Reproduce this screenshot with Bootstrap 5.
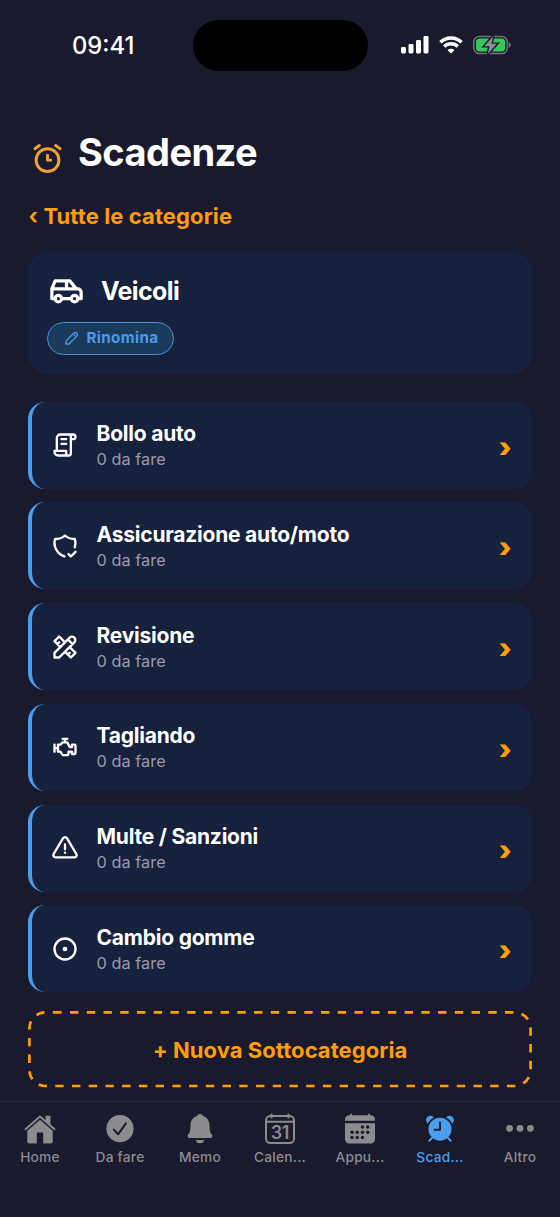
<!DOCTYPE html>
<html lang="it">
<head>
<meta charset="utf-8">
<meta name="viewport" content="width=device-width, initial-scale=1">
<title>Scadenze</title>
<link href="https://cdn.jsdelivr.net/npm/bootstrap@5.3.0/dist/css/bootstrap.min.css" rel="stylesheet">
<script src="https://cdn.jsdelivr.net/npm/bootstrap@5.3.0/dist/js/bootstrap.bundle.min.js" defer></script>
<style>
  body { background:#1a1a2e; color:#fff; font-family:Inter,"Liberation Sans",sans-serif; height:1217px; overflow:hidden; line-height:1; }
  svg { display:block; flex:none; }
  .tb { fill:none; stroke:currentColor; stroke-width:2; stroke-linecap:round; stroke-linejoin:round; }
  .status-row { height:90px; padding:0 49px 0 72px; }
  .clock { font-size:23.8px; font-weight:500; width:120.600px; padding-top:2px; }
  .island { width:175px; height:51px; border-radius:26px; background:#000; }
  .page-head { height:44px; margin-top:46px; padding-left:28px; }
  .page-head h1 { font-size:38px; font-weight:700; margin:-13px 0 0 11px; letter-spacing:-.55px; line-height:44px; }
  .amber { color:#ff9d0a; }
  .back-link { font-size:22px; font-weight:700; line-height:28px; margin:22px 0 0 28.500px; letter-spacing:.1px; text-decoration:none; }
  .panel { background:#16213e; border-radius:19.500px; }
  .cat-head { margin:21.500px 28px 0; height:122px; padding:19.500px 19px 0; }
  .cat-head h2 { font-size:25px; font-weight:700; margin:0 0 0 15px; letter-spacing:-.6px; }
  .btn-rename { height:33px; width:127px; border:1.4px solid #4a90d9; border-radius:17px; background:#1a3a5c; color:#4a9aea; font-size:15.2px; font-weight:700; margin-top:11.500px; padding:0 0 0 15px; letter-spacing:.35px; }
  .items { margin:28px 28px 0; gap:13.8px; }
  .item-row { height:87px; border-left:4px solid #4a9eed; border-radius:17px; padding:0 20.500px 0 19px; color:#fff; text-decoration:none; }
  .item-row .label-col { margin:-1px 0 0 17.500px; }
  .item-row .name { font-size:21px; font-weight:700; line-height:26px; letter-spacing:-.22px; margin-top:1px; }
  .item-row .todo { font-size:16.3px; line-height:20px; margin-top:2px; color:#9a9bab; letter-spacing:.05px; }
  .item-row .chev { font-size:27px; font-weight:900; line-height:30px; padding-top:5px; }
  .new-sub { margin:19px 28px 0; height:77px; font-size:22px; font-weight:700; letter-spacing:.06px; background:none; border:0; }
  .tabs { margin-top:12.500px; border-top:1px solid #29293b; height:116px; padding-top:11px; }
  .tabs a { width:80px; color:#8c8c8e; font-size:13.7px; font-weight:500; letter-spacing:.25px; text-decoration:none; }
  .tabs a svg { width:34px; height:32px; }
  .tabs a span { margin-top:3.600px; line-height:16px; }
  .tabs a.active { color:#4a9eed; }
</style>
</head>
<body class="d-flex flex-column">
<header class="status-row d-flex align-items-center flex-shrink-0">
  <span class="clock">09:41</span>
  <div class="island"></div>
  <div class="d-flex align-items-center ms-auto">
    <svg width="28" height="18" viewBox="0 0 28 18" fill="#fff"><rect x="0" y="11" width="5" height="6.5" rx="1.4"/><rect x="7.5" y="8" width="5" height="9.5" rx="1.4"/><rect x="15" y="4" width="5" height="13.5" rx="1.4"/><rect x="22.5" y="0" width="5" height="17.5" rx="1.4"/></svg>
    <svg style="margin-left:10px" width="24" height="18" viewBox="0 0 24 18"><g fill="none" stroke="#fff" stroke-width="3.3"><path d="M1.4 6.3a15.2 15.2 0 0 1 21.2 0"/><path d="M5.2 10.5a9.8 9.8 0 0 1 13.6 0"/></g><path d="M12 17.6l-3.5-3.5a5 5 0 0 1 7 0z" fill="#fff"/></svg>
    <svg style="margin-left:10px" width="38" height="20" viewBox="0 0 38.500 20"><rect x=".8" y="1.3" width="34" height="17.4" rx="5.8" fill="none" stroke="#747381" stroke-width="1.5"/><path d="M36.3 7v6q2-.8 2-3t-2-3z" fill="#747381"/><rect x="3" y="3.5" width="29.6" height="13" rx="3.8" fill="#34c759"/><path d="M20.500.8L11.500 11.200h5.400l-2 8L24.200 8.800h-5.500z" fill="#8f8d97" stroke="#1a1a2e" stroke-width="2.800" paint-order="stroke"/></svg>
  </div>
</header>

<div class="page-head d-flex align-items-center flex-shrink-0">
  <svg class="tb" width="39" height="39" viewBox="0 0 24 24" style="color:#f2a136;stroke-width:1.800"><circle cx="12" cy="13" r="7"/><path d="M12 10v3h2M7 4L4.25 6M17 4l2.75 2"/></svg>
  <h1>Scadenze</h1>
</div>
<a class="back-link amber" href="#">‹ Tutte le categorie</a>

<section class="panel cat-head flex-shrink-0">
  <div class="d-flex align-items-center">
    <svg class="tb" width="39" height="39" viewBox="0 0 24 24"><circle cx="7" cy="17" r="2"/><circle cx="17" cy="17" r="2"/><path d="M5 17H3v-6l2-5h9l4 5h1a2 2 0 0 1 2 2v4h-2m-4 0H9m-6-6h15m-6 0V6"/></svg>
    <h2>Veicoli</h2>
  </div>
  <button class="btn-rename d-flex align-items-center"><svg class="tb me-2" style="stroke-width:1.7" width="18" height="18" viewBox="0 0 24 24"><path d="M4 20h4L18.500 9.500a2.828 2.828 0 1 0-4-4L4 16v4M13.500 6.500l4 4"/></svg><span style="margin-left:-2.500px">Rinomina</span></button>
</section>

<main class="items d-flex flex-column flex-shrink-0">
  <a href="#" class="panel item-row d-flex align-items-center">
    <svg class="tb" width="28" height="28" viewBox="0 0 24 24"><path d="M15 21H6a3 3 0 0 1-3-3v-1h10v2a2 2 0 0 0 4 0V5a2 2 0 1 1 2 2h-2m2-4H8a3 3 0 0 0-3 3v11M9 7h4M9 11h4"/></svg>
    <div class="label-col"><div class="name">Bollo auto</div><div class="todo">0 da fare</div></div><span class="chev amber ms-auto">›</span>
  </a>
  <a href="#" class="panel item-row d-flex align-items-center">
    <svg class="tb" width="28" height="28" viewBox="0 0 24 24"><path d="M11.460 20.846a12 12 0 0 1-7.960-14.846a12 12 0 0 0 8.500-3a12 12 0 0 0 8.500 3a12 12 0 0 1-.09 7.060M15 19l2 2 4-4"/></svg>
    <div class="label-col"><div class="name">Assicurazione auto/moto</div><div class="todo">0 da fare</div></div><span class="chev amber ms-auto">›</span>
  </a>
  <a href="#" class="panel item-row d-flex align-items-center">
    <svg class="tb" width="28" height="28" viewBox="0 0 24 24"><path d="M3 21h4L20 8a1.500 1.500 0 0 0-4-4L3 17v4M14.500 5.500l4 4M12 8L7 3 3 7l5 5M7 8L5.500 9.500M16 12l5 5-4 4-5-5M16 17l-1.500 1.500"/></svg>
    <div class="label-col"><div class="name">Revisione</div><div class="todo">0 da fare</div></div><span class="chev amber ms-auto">›</span>
  </a>
  <a href="#" class="panel item-row d-flex align-items-center">
    <svg class="tb" width="28" height="28" viewBox="0 0 24 24"><path d="M3 10v6M12 5v3M10 5h4M5 13H3M6 10h2l2-2h3.382a1 1 0 0 1 .894.553l1.448 2.894a1 1 0 0 0 .894.553H18v-2h2a1 1 0 0 1 1 1v6a1 1 0 0 1-1 1h-2v-2h-3v2a1 1 0 0 1-1 1h-3.465a1 1 0 0 1-.832-.445L8 16H6v-6"/></svg>
    <div class="label-col"><div class="name">Tagliando</div><div class="todo">0 da fare</div></div><span class="chev amber ms-auto">›</span>
  </a>
  <a href="#" class="panel item-row d-flex align-items-center">
    <svg class="tb" width="28" height="28" viewBox="0 0 24 24"><path d="M12 9v4M12 16h.01M10.363 3.591L2.257 17.125a1.914 1.914 0 0 0 1.636 2.871h16.214a1.914 1.914 0 0 0 1.636-2.870L13.637 3.590a1.914 1.914 0 0 0-3.274 0z"/></svg>
    <div class="label-col"><div class="name">Multe / Sanzioni</div><div class="todo">0 da fare</div></div><span class="chev amber ms-auto">›</span>
  </a>
  <a href="#" class="panel item-row d-flex align-items-center">
    <svg class="tb" width="28" height="28" viewBox="0 0 24 24"><circle cx="12" cy="12" r="9"/><circle cx="12" cy="12" r="1" fill="currentColor"/></svg>
    <div class="label-col"><div class="name">Cambio gomme</div><div class="todo">0 da fare</div></div><span class="chev amber ms-auto">›</span>
  </a>
</main>

<button class="new-sub amber position-relative flex-shrink-0 p-0">
  <svg class="position-absolute top-0 start-0" width="504" height="77" viewBox="0 0 504 77"><path d="M25.300 1.400H486.600a16 16 0 0 1 16 16V59a16 16 0 0 1-16 16H17.400a16 16 0 0 1-16-16V17.400a16 16 0 0 1 16-16h7.900" fill="none" stroke="#ff9d0a" stroke-width="2.7" stroke-dasharray="8.400 8.330"/></svg>
  + Nuova Sottocategoria
</button>

<nav class="tabs d-flex flex-shrink-0">
  <a href="#" class="d-flex flex-column align-items-center"><svg viewBox="0 0 34 32" fill="currentColor"><path d="M2.500 16.200L17 3.500l14.500 12.700" fill="none" stroke="currentColor" stroke-width="2" stroke-linecap="round" stroke-linejoin="round"/><path d="M22.500 2.700h5v10l-5-4.500zM17 6.800l12.700 11v10.700a2 2 0 0 1-2 2h-7.500V20.300a.8.8 0 0 0-.8-.8h-4.800a.8.800 0 0 0-.8.800V30.500H6.300a2 2 0 0 1-2-2V17.800z"/></svg><span>Home</span></a>
  <a href="#" class="d-flex flex-column align-items-center"><svg viewBox="0 0 34 32"><circle cx="17" cy="15.700" r="13.600" fill="currentColor"/><path d="M10.800 16.600l4.300 4.700 7.800-11" fill="none" stroke="#1a1a2e" stroke-width="2" stroke-linecap="round" stroke-linejoin="round"/></svg><span>Da fare</span></a>
  <a href="#" class="d-flex flex-column align-items-center"><svg viewBox="0 0 34 32" fill="currentColor"><path d="M17 .9a3 3 0 0 1 3 2.200c4.300 1.300 6.600 5 6.600 9.800 0 5.300.6 6.500 2.300 8.700 1.200 1.700.4 3.300-1.300 3.300H6.400c-1.700 0-2.500-1.600-1.300-3.300 1.700-2.200 2.300-3.400 2.300-8.700C7.400 8.100 9.700 4.400 14 3.100A3 3 0 0 1 17 .9zM12.700 27h8.600c-.4 2-2.100 3.300-4.300 3.300s-3.900-1.300-4.300-3.300z"/></svg><span>Memo</span></a>
  <a href="#" class="d-flex flex-column align-items-center"><svg viewBox="0 0 34 32"><rect x="3" y="3" width="28" height="27" rx="4.200" fill="none" stroke="currentColor" stroke-width="2"/><path d="M3.200 8.800h27.600M8.500 1.500v3M25.500 1.500v3" fill="none" stroke="currentColor" stroke-width="2" stroke-linecap="round"/><text x="16.800" y="25.800" text-anchor="middle" font-size="18" font-weight="600" letter-spacing="-.5" fill="currentColor">31</text></svg><span>Calen...</span></a>
  <a href="#" class="d-flex flex-column align-items-center"><svg viewBox="0 0 34 32"><path d="M2 7.800V6.500a4.200 4.200 0 0 1 4.200-4.200h21.600A4.200 4.200 0 0 1 32 6.500v1.300zM2 10.200h30v16a4.200 4.200 0 0 1-4.200 4.200H6.200A4.200 4.200 0 0 1 2 26.200z" fill="currentColor"/><path d="M8 1.400v2M26 1.400v2" stroke="currentColor" stroke-width="1.800" stroke-linecap="round"/><g fill="#1a1a2e"><circle cx="19.500" cy="14" r="1.700"/><circle cx="24.700" cy="14" r="1.700"/><circle cx="9" cy="19.300" r="1.700"/><circle cx="14.200" cy="19.300" r="1.700"/><circle cx="19.500" cy="19.300" r="1.700"/><circle cx="24.700" cy="19.300" r="1.700"/><circle cx="9" cy="24.500" r="1.700"/><circle cx="14.200" cy="24.500" r="1.700"/><circle cx="19.500" cy="24.500" r="1.700"/></g></svg><span>Appu...</span></a>
  <a href="#" class="active d-flex flex-column align-items-center"><svg viewBox="0 0 34 32"><g fill="currentColor"><circle cx="7.300" cy="7" r="4.200"/><circle cx="26.700" cy="7" r="4.200"/></g><circle cx="17" cy="16.200" r="12.400" fill="currentColor" stroke="#1a1a2e" stroke-width="1.800"/><path d="M9 25l-2.700 2.800M25 25l2.700 2.800" stroke="currentColor" stroke-width="2" stroke-linecap="round"/><path d="M17 9.300v7.400h-5.500" fill="none" stroke="#1a1a2e" stroke-width="1.900" stroke-linecap="round" stroke-linejoin="round"/></svg><span>Scad...</span></a>
  <a href="#" class="d-flex flex-column align-items-center"><svg viewBox="0 0 34 32" fill="currentColor"><circle cx="6.600" cy="15.300" r="3.400"/><circle cx="17" cy="15.300" r="3.400"/><circle cx="27.400" cy="15.300" r="3.400"/></svg><span>Altro</span></a>
</nav>
</body>
</html>
